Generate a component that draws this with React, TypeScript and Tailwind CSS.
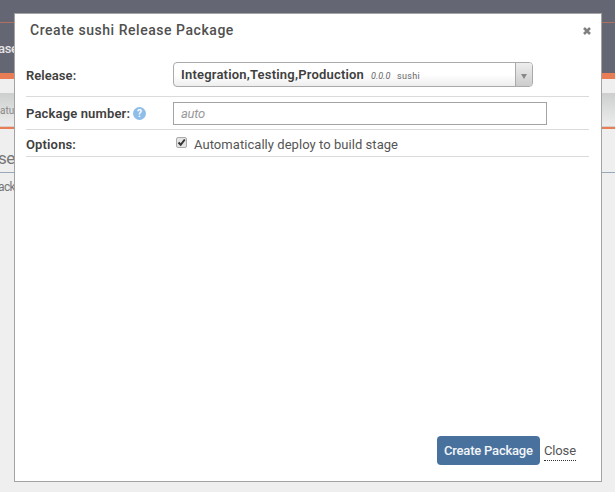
import type { ReactNode } from 'react';

function PageBehind() {
  return (
    <div className="h-[492px] w-[615px] overflow-hidden bg-[#efefef] text-[#777]">
      <div className="h-[22px] bg-[#646773]" />
      <div className="h-px bg-[#b0705f]" />
      <div className="h-[50px] bg-[#646773] pt-[16px] text-[13px] leading-5 font-medium text-[#e4e4e6]">
        <span className="-ml-[2px] tracking-[-0.3px]">ase</span>
      </div>
      <div className="h-[6px] bg-[#e87d56]" />
      <div className="h-[14px]" />
      <div className="h-[34px] border-b border-[#d9cfca] bg-linear-to-b from-[#cdcfcf] to-[#ededed] pt-[10px] text-[10px] leading-4 text-[#888]">
        atu
      </div>
      <div className="h-[2px] bg-[#e87d56]" />
      <div className="h-[43px] pt-[17px] text-[17px] leading-6">
        <span className="-ml-[2px] tracking-[-0.4px]">se</span>
      </div>
      <div className="h-px bg-[#99a8b8]" />
      <div className="pt-[4px] text-[12px] leading-5">
        <span className="-ml-[2px] tracking-[-0.6px]">ack</span>
      </div>
    </div>
  );
}

function Row({ label, className, children }: { label: ReactNode; className: string; children: ReactNode }) {
  return (
    <div className={`flex border-b border-[#dbdbdb] ${className}`}>
      <div className="flex w-[147px] shrink-0 text-[13px] leading-5 font-semibold text-[#404040]">{label}</div>
      {children}
    </div>
  );
}

export default function App() {
  return (
    <div className="relative h-[492px] w-[615px] overflow-hidden font-['Roboto','Liberation_Sans',sans-serif]">
      <PageBehind />
      <div className="absolute top-[13px] left-[14px] flex h-[469px] w-[588px] flex-col border border-[#a3a3a3] bg-white">
        <div className="flex h-[43px] justify-between pt-[6px] pr-[10px] pl-[15px]">
          <h1 className="text-[14px] leading-5 font-medium tracking-[0.54px] whitespace-nowrap text-[#505050]">
            Create sushi Release Package
          </h1>
          <svg className="mt-[7px] h-[8px] w-[8px]" viewBox="0 0 8 8">
            <path d="M1 1L7 7M7 1L1 7" stroke="#808080" strokeWidth="2.6" />
          </svg>
        </div>
        <div className="ml-[11px] w-[563px]">
          <Row className="h-[40px] pt-[5px]" label={<span className="pt-[4px] tracking-[0.05px]">Release:</span>}>
            <div className="flex h-[25px] w-[360px] overflow-hidden rounded-[4px] border border-[#aaa] bg-linear-to-b from-white from-50% to-[#eee] whitespace-nowrap">
              <div className="flex w-[341px] items-baseline pl-[7px] leading-[23px]">
                <span className="w-[190px] text-[13px] font-semibold tracking-[0.2px] text-[#404040]">
                  Integration,Testing,Production
                </span>
                <span className="w-[26px] text-[9px] text-[#666] italic">0.0.0</span>
                <span className="text-[9px] tracking-[0.3px] text-[#666]">sushi</span>
              </div>
              <div className="flex w-[17px] items-center justify-center border-l border-[#aaa] bg-linear-to-b from-[#eee] to-[#ccc]">
                <svg className="mt-[3px] h-[5px] w-[6px]" viewBox="0 0 6 5">
                  <path d="M0 0H6L3 5Z" fill="#888" />
                </svg>
              </div>
            </div>
          </Row>
          <Row
            className="h-[33px] pt-[5px]"
            label={
              <span className="flex pt-[2px]">
                <span className="w-[107px] tracking-[0.15px]">Package number:</span>
                <span className="mt-[3px] flex h-[13px] w-[13px] items-center justify-center rounded-full bg-[#8dbde8] text-[10px] leading-none font-bold text-white">
                  ?
                </span>
              </span>
            }
          >
            <div className="h-[23px] w-[374px] border border-[#a4a4a4] pl-[7px] text-[13px] leading-[22px] tracking-[-0.3px] text-[#999] italic">
              auto
            </div>
          </Row>
          <Row className="h-[27px] pt-[5px]" label={<span className="tracking-[0.15px]">Options:</span>}>
            <svg className="mt-[2px] ml-[3px] h-[11px] w-[11px]" viewBox="0 0 11 11">
              <rect x=".5" y=".5" width="10" height="10" rx="1.5" fill="#e4e4e4" stroke="#aaa" />
              <path d="M2.5 5.5L4.7 7.8L8.8 2.5" fill="none" stroke="#333" strokeWidth="2" />
            </svg>
            <span className="ml-[7px] text-[13px] leading-5 tracking-[0.05px] text-[#555]">
              Automatically deploy to build stage
            </span>
          </Row>
        </div>
        <div className="mt-auto mr-[25px] mb-[16px] flex justify-end whitespace-nowrap">
          <div className="h-[29px] w-[103px] rounded-[4px] bg-[#48719e] pl-[7px] text-[13px] leading-[30px] font-medium tracking-[-0.2px] text-[#f2f5f8]">
            Create Package
          </div>
          <div className="mt-[5px] ml-[4px] h-[20px] w-[32px] border-b border-dotted border-[#333] text-[13px] leading-5 tracking-[-0.15px] text-[#555]">
            Close
          </div>
        </div>
      </div>
    </div>
  );
}
